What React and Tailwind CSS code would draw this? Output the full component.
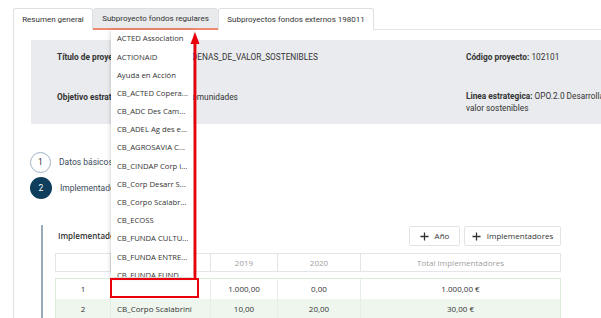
const opciones = [
  "ACTED Association",
  "ACTIONAID",
  "Ayuda en Acción",
  "CB_ACTED Copera...",
  "CB_ADC Des Cam...",
  "CB_ADEL Ag des e...",
  "CB_AGROSAVIA C...",
  "CB_CINDAP Corp i...",
  "CB_Corp Desarr S...",
  "CB_Corpo Scalabr...",
  "CB_ECOSS",
  "CB_FUNDA CULTU...",
  "CB_FUNDA ENTRE...",
  "CB_FUNDA FUND...",
];

const filas = [
  { n: "1", nombre: "", a2019: "1.000,00", a2020: "0,00", total: "1.000,00 €", bg: "bg-white" },
  { n: "2", nombre: "CB_Corpo Scalabrini", a2019: "10,00", a2020: "20,00", total: "30,00 €", bg: "bg-[#eef6ee]" },
];

function Plus() {
  return (
    <svg width="9" height="9" viewBox="0 0 10 10" className="shrink-0">
      <path d="M5 0.5v9M0.5 5h9" stroke="#333" strokeWidth="1.4" />
    </svg>
  );
}

export default function App() {
  return (
    <div className="relative w-[601px] h-[318px] overflow-hidden bg-white text-[#333] font-['Roboto',sans-serif]">
      {/* pestañas */}
      <div className="flex pt-[8px] pl-[13px] text-[8px]">
        <div className="h-[22px] w-[80px] flex items-center justify-center border border-b-0 border-[#dcdfe3] rounded-t-[3px] bg-white">
          Resumen general
        </div>
        <div className="h-[22px] w-[125px] flex items-center justify-center border-t border-[#dcdfe3] bg-[#e9eaec] border-b-[2px] border-b-[#ee8a6e] rounded-t-[3px]">
          Subproyecto fondos regulares
        </div>
        <div className="h-[22px] w-[156px] flex items-center justify-center border border-b-0 border-[#dcdfe3] rounded-t-[3px] bg-white">
          Subproyectos fondos externos 198011
        </div>
        <div className="flex-1 border-b border-[#e3e6ea]" />
      </div>

      {/* contenido */}
      <div className="ml-[13px] border-l border-[#dcdfe3] h-[288px]">
        <div className="pl-[17px] pt-[10px]">
          <div className="h-[84px] bg-[#e9ebee] grid grid-cols-[409px_1fr] pl-[26px] pt-[11px] text-[8.3px] whitespace-nowrap overflow-hidden">
            <div className="h-[30px]">
              <b className="font-bold">Título de proyecto:</b> SUBPRY_001_CADENAS_DE_VALOR_SOSTENIBLES
            </div>
            <div>
              <b className="font-bold">Código proyecto:</b> 102101
            </div>
            <div>
              <b className="font-bold">Objetivo estratégico:</b> OE.1 Apoyo a comunidades
            </div>
            <div className="leading-[12px] -mt-[1px]">
              <b className="font-bold">Linea estrategica:</b> OPO.2.0 Desarrollar cadenas de
              <br />
              valor sostenibles
            </div>
          </div>
        </div>

        {/* pasos */}
        <div className="pl-[16px] pt-[28px] flex flex-col gap-[4px] text-[8.5px] text-[#3a4a5c]">
          <div className="flex items-center gap-[8px]">
            <div className="w-[21px] h-[21px] rounded-full border-[1.5px] border-[#9fb2c4] flex items-center justify-center text-[#333]">
              1
            </div>
            Datos básicos
          </div>
          <div className="flex items-center gap-[8px]">
            <div className="w-[22px] h-[22px] rounded-full bg-[#0f3d5c] flex items-center justify-center text-white">
              2
            </div>
            Implementadores
          </div>
        </div>

        {/* implementadores */}
        <div className="ml-[27px] mt-[26px] border-l-2 border-[#9aaabb] pl-[12px] pt-[1px] font-['Open_Sans',sans-serif] text-[8px]">
          <div className="flex items-center justify-between w-[506px] h-[20px]">
            <span className="pl-[3px] font-semibold">Implementadores</span>
            <div className="flex gap-[4px]">
              <button className="h-[20px] w-[51px] flex items-center justify-center gap-[6px] border border-[#e1e3e6] rounded-[2px] bg-white">
                <Plus />
                Año
              </button>
              <button className="h-[20px] w-[97px] flex items-center justify-center gap-[6px] border border-[#e1e3e6] rounded-[2px] bg-white">
                <Plus />
                Implementadores
              </button>
            </div>
          </div>

          <div className="mt-[7px] w-[506px] h-[19px] grid grid-cols-[55px_100px_67px_83px_1fr] border border-[#e3e5e8] text-[#a0a0a0]">
            <div className="border-r border-[#e3e5e8]" />
            <div className="border-r border-[#e3e5e8]" />
            <div className="border-r border-[#e3e5e8] flex items-center justify-center">2019</div>
            <div className="border-r border-[#e3e5e8] flex items-center justify-center">2020</div>
            <div className="flex items-center justify-center">Total Implementadores</div>
          </div>

          <div className="mt-[6px] w-[506px] border border-[#dcebdc] border-b-0">
            {filas.map((f) => (
              <div
                key={f.n}
                className={`grid grid-cols-[55px_100px_67px_83px_1fr] h-[20px] ${f.bg}`}
              >
                <div className="flex items-center justify-center border-r border-[#e6efe6]">{f.n}</div>
                <div className="flex items-center pl-[6px] border-r border-[#e6efe6]">{f.nombre}</div>
                <div className="flex items-center justify-center border-r border-[#e6efe6]">{f.a2019}</div>
                <div className="flex items-center justify-center border-r border-[#e6efe6]">{f.a2020}</div>
                <div className="flex items-center justify-center">{f.total}</div>
              </div>
            ))}
          </div>
        </div>
      </div>

      {/* desplegable */}
      <div className="absolute left-[111px] top-[30px] w-[82px] h-[247px] bg-white overflow-hidden shadow-[0_1px_4px_rgba(0,0,0,0.25)] font-['Open_Sans',sans-serif] text-[7.7px] text-[#333]">
        {opciones.map((o) => (
          <div key={o} className="h-[18.2px] flex items-center pl-[6px] whitespace-nowrap">
            {o}
          </div>
        ))}
      </div>

      {/* anotaciones */}
      <svg className="absolute left-[188px] top-[30px]" width="14" height="250" viewBox="0 0 14 250">
        <path d="M7 12V248" stroke="#e8000b" strokeWidth="2.8" />
        <path d="M7 2L2.5 14H11.5Z" fill="#e8000b" />
      </svg>
      <div className="absolute left-[110px] top-[278px] w-[89px] h-[20px] border-2 border-[#e8000b]" />
    </div>
  );
}
